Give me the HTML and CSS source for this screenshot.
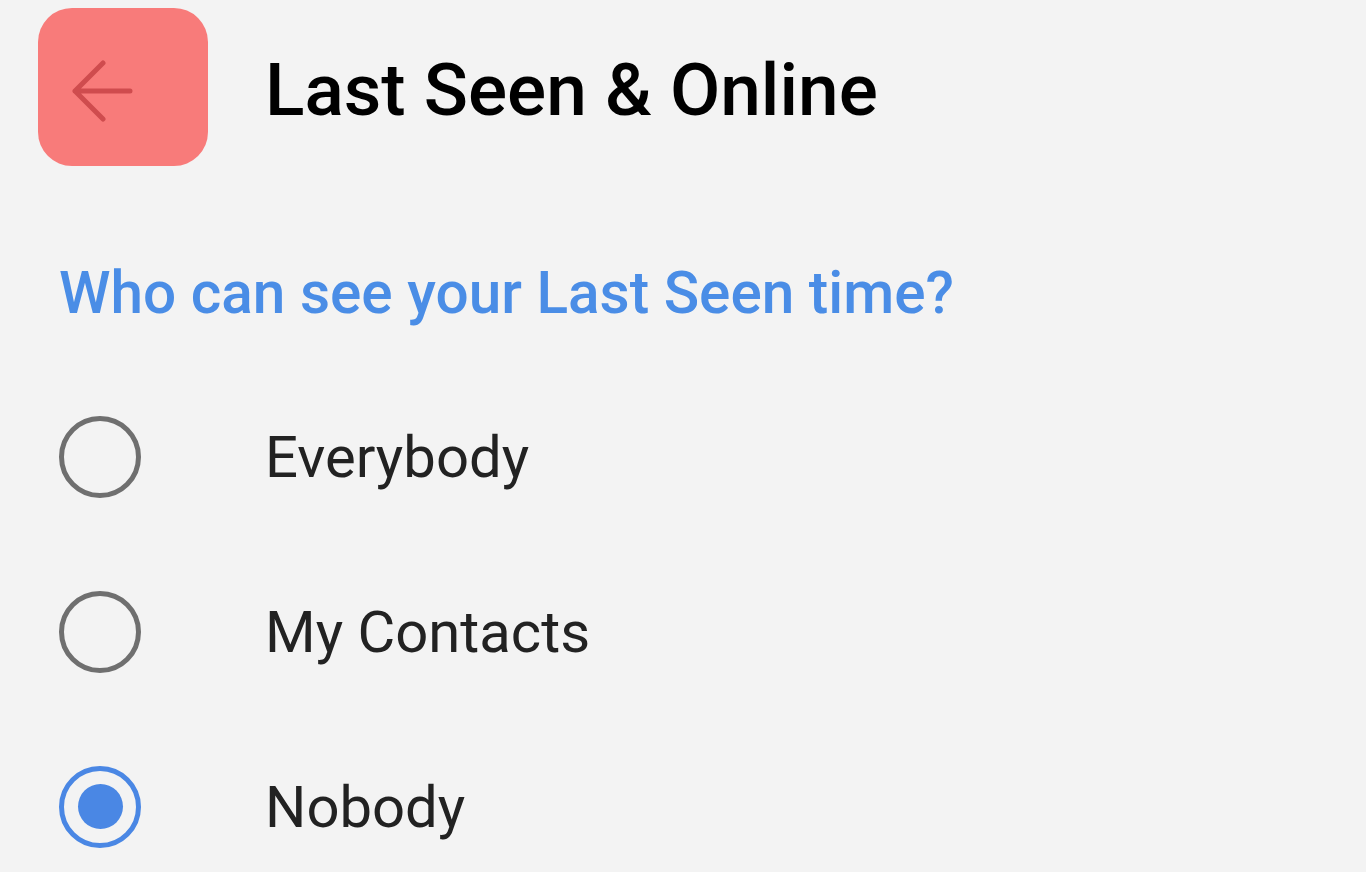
FILE: index.html
```html
<!DOCTYPE html>
<html lang="en">
<head>
  <meta charset="UTF-8" />
  <title>Last Seen &amp; Online</title>
  <link rel="stylesheet" href="styles.css">
</head>
<body>

  <header class="top-bar">
    <a href="#" class="back-btn" aria-label="Back">
      <svg width="62" height="62" viewBox="0 0 62 62">
        <path d="M59 31H4M32 3L4 31L32 59" fill="none" stroke="#cf4c4e" stroke-width="5" stroke-linecap="round" stroke-linejoin="round" />
      </svg>
    </a>
    <h1>Last Seen &amp; Online</h1>
  </header>

  <section class="privacy">
    <h2>Who can see your Last Seen time?</h2>

    <label class="option">
      <input type="radio" name="last_seen" value="everybody" />
      <span class="radio"></span>
      <span class="option-text">Everybody</span>
    </label>

    <label class="option">
      <input type="radio" name="last_seen" value="contacts" />
      <span class="radio"></span>
      <span class="option-text">My Contacts</span>
    </label>

    <label class="option">
      <input type="radio" name="last_seen" value="nobody" checked />
      <span class="radio"></span>
      <span class="option-text">Nobody</span>
    </label>
  </section>

</body>
</html>
```

FILE: styles.css
```css
body {
  margin: 0;
  font-family: Roboto, "Noto Sans", sans-serif;
  background: #f3f3f3;
  color: #222;
}

.top-bar {
  display: flex;
  align-items: center;
  padding: 8px 0 0 38px;
}

.back-btn {
  display: flex;
  align-items: center;
  width: 170px;
  height: 158px;
  padding: 7px 0 0 33px;
  box-sizing: border-box;
  background: #f87b7a;
  border-radius: 34px;
}

h1 {
  margin: 6px 0 0 57px;
  font-size: 73px;
  font-weight: 500;
  color: #000;
}

.privacy {
  padding: 93px 0 0 59px;
}

h2 {
  margin: 0 0 42px;
  font-size: 58.5px;
  font-weight: 500;
  color: #4a8de6;
}

.option {
  display: flex;
  align-items: center;
  height: 175px;
  cursor: pointer;
}

.option input {
  display: none;
}

.radio {
  width: 72px;
  height: 72px;
  border: 5px solid #6f6f6f;
  border-radius: 50%;
  display: flex;
  align-items: center;
  justify-content: center;
}

.option input:checked + .radio {
  border-color: #4a87e4;
}

.option input:checked + .radio::after {
  content: "";
  width: 45px;
  height: 45px;
  border-radius: 50%;
  background: #4a87e4;
}

.option-text {
  margin-left: 124px;
  font-size: 58px;
  color: #222;
}
```
